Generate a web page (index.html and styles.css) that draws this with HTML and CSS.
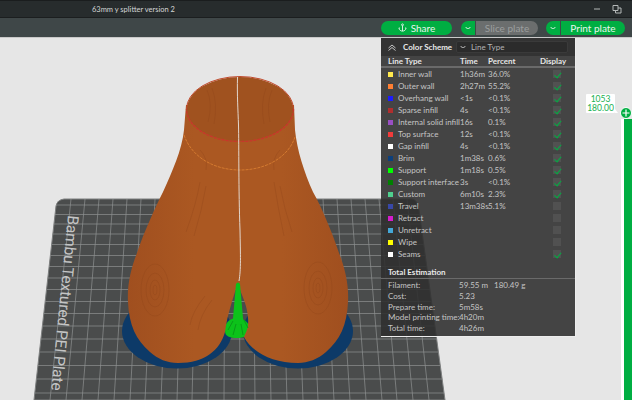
FILE: index.html
```html
<!DOCTYPE html>
<html lang="en">
<head>
<meta charset="utf-8">
<title>63mm y splitter version 2</title>
<link rel="stylesheet" href="styles.css">
</head>
<body>
<div class="app">
  <header class="titlebar">
    <span class="doc-title">63mm y splitter version 2</span>
    <div class="win-controls">
      <svg class="win-icon" width="8" height="8" viewBox="0 0 8 8"><path d="M1 4H7" class="win-stroke"/></svg>
      <svg class="win-icon" width="10" height="10" viewBox="0 0 10 10"><path d="M1 1.500H6V6.500H1ZM3.500 6.500V9H9V4H6" class="win-stroke"/></svg>
    </div>
  </header>
  <div class="toolbar">
    <button class="btn share">
      <svg width="9" height="9" viewBox="0 0 10 10"><path d="M5 3V9M2 5.500H1C1.500 8 3 9 5 9S8.500 8 9 5.500H8M5 1A1 1 0 1 0 5 3A1 1 0 1 0 5 1Z" class="btn-stroke"/></svg>
      <span>Share</span>
    </button>
    <div class="split slice-group">
      <button class="btn caret"><svg width="6" height="4" viewBox="0 0 6 4"><path d="M.5 1C2 3 4 3 5.500 1" class="btn-stroke"/></svg></button>
      <button class="btn slice">Slice plate</button>
    </div>
    <div class="split print-group">
      <button class="btn caret"><svg width="6" height="4" viewBox="0 0 6 4"><path d="M.5 1C2 3 4 3 5.500 1" class="btn-stroke"/></svg></button>
      <button class="btn print">Print plate</button>
    </div>
  </div>
  <main class="viewport">
    <svg class="scene" width="632" height="362" viewBox="0 38 632 362">
      <defs>
        <clipPath id="plate-clip"><path d="M64 199H412Q417 199 419 210L445 400H34L56 206Q57 200 64 199Z"/></clipPath>
        <linearGradient id="body-fill" x1="0" x2="1" y1="0" y2="0">
          <stop offset="0" stop-color="#a04f1f"/>
          <stop offset=".3" stop-color="#ab5822"/>
          <stop offset=".7" stop-color="#ab5822"/>
          <stop offset="1" stop-color="#a04f1f"/>
        </linearGradient>
      </defs>
      <path class="plate" d="M64 199H412Q417 199 419 210L445 400H34L56 206Q57 200 64 199Z"/>
      <g clip-path="url(#plate-clip)">
        <path class="grid" d="M0 205H632M0 214.500H632M0 224H632M0 234H632M0 244.500H632M0 255.500H632M0 266.500H632M0 278H632M0 289.500H632M0 301.500H632M0 313.500H632M0 326H632M0 339H632M0 352H632M0 365.500H632M0 379H632M0 393H632"/>
        <path class="grid" d="M71 199L50 400M85 199L66 400M99 199L82 400M113 199L98 400M127 199L114 400M141 199L130 400M155 199L145 400M169 199L161 400M183 199L177 400M197 199L192 400M211 199L208 400M225 199L224 400M239 199L240 400M253 199L255 400M267 199L271 400M281 199L287 400M295 199L303 400M309 199L318 400M323 199L334 400M337 199L350 400M351 199L366 400M365 199L382 400M379 199L397 400M393 199L413 400M407 199L429 400"/>
      </g>
      <text class="plate-label" x="0" y="0" transform="translate(68 215) rotate(95.500)">Bambu Textured PEI Plate</text>
      <ellipse class="brim" cx="177" cy="331" rx="55" ry="37.500"/>
      <ellipse class="brim" cx="298" cy="331" rx="55" ry="37.500"/>
      <path class="support" d="M225 331C224 322 231 318 237 318C244 318 250 323 250 330C250 336 243 338 237 338C231 338 225 337 225 331Z"/>
      <path class="body" fill="url(#body-fill)" d="M186 105L184 130C182 150 172 172 163 192C155 208 144 232 137 253C131 268 127 285 128 302C129 325 136 340 150 352C158 359 167 363 178 363C205 363 220 350 225 332C227 315 234 295 238 283C241 295 247 303 248 318C249 328 246 332 244 337C252 352 272 363 298 363C308 363 318 359 326 352C340 340 347 325 348 302C349 285 345 268 339 253C332 232 322 208 313 192C304 172 297 150 295 130L294 105Z"/>
      <path class="support" d="M236 284Q238 281 240 284L243 318Q245 324 238 325Q232 324 233 318Z"/>
      <path class="support-rib" d="M233 321L228 330M236 324L233 335M241 324L243 335M244 320L248 328"/>
      <g class="rings">
        <ellipse cx="155" cy="290" rx="2" ry="5"/>
        <ellipse cx="155" cy="290" rx="5" ry="10"/>
        <ellipse cx="155" cy="290" rx="9" ry="17"/>
        <ellipse cx="155" cy="290" rx="14" ry="26"/>
        <ellipse cx="318" cy="288" rx="2" ry="5"/>
        <ellipse cx="318" cy="288" rx="5" ry="10"/>
        <ellipse cx="318" cy="288" rx="9" ry="17"/>
        <ellipse cx="318" cy="288" rx="14" ry="26"/>
        <path d="M200 182Q196 205 186 232M206 186Q202 210 194 236M280 186Q284 208 292 232M274 182Q278 208 284 236M212 300Q200 315 198 330M205 296Q192 312 190 325"/>
      </g>
      <ellipse class="neck-inner" cx="240" cy="109" rx="53" ry="32"/>
      <g class="rings">
        <path d="M207 90Q213 104 208 122M212 88Q218 104 214 124M272 90Q266 104 270 122M266 88Q260 104 264 124M200 150Q208 158 206 170M280 150Q272 158 274 170"/>
      </g>
      <path class="collar" d="M184 135C192 158 215 170 240 170C265 170 288 158 295 137"/>
      <path class="rim-back" d="M186.500 109A53.500 32.500 0 0 1 293.500 109"/>
      <path class="rim" d="M293.500 109A53.500 32.500 0 0 1 186.500 109"/>
      <path class="seam" d="M237.500 77C237 95 238 110 238.500 125C239 145 238.500 190 240 230C240.500 255 241 270 239 281"/>
    </svg>

    <section class="legend">
      <div class="legend-top">
        <svg class="collapse" width="8" height="7" viewBox="0 0 8 7"><path d="M.5 4L4 1L7.500 4M.5 6.500L4 3.500L7.500 6.500" class="icon-stroke"/></svg>
        <strong class="scheme-label">Color Scheme</strong>
        <div class="scheme-select">
          <svg width="6" height="4" viewBox="0 0 6 4"><path d="M.5 1C2 3 4 3 5.500 1" class="icon-stroke"/></svg>
          <span>Line Type</span>
        </div>
      </div>
      <div class="legend-head">
        <span>Line Type</span><span>Time</span><span>Percent</span><span>Display</span>
      </div>
      <ul class="rows">
        <li class="row"><i class="sw c1"></i><span>Inner wall</span><span>1h36m</span><span>36.0%</span><b class="chk on"></b></li>
        <li class="row"><i class="sw c2"></i><span>Outer wall</span><span>2h27m</span><span>55.2%</span><b class="chk on"></b></li>
        <li class="row"><i class="sw c3"></i><span>Overhang wall</span><span>&lt;1s</span><span>&lt;0.1%</span><b class="chk on"></b></li>
        <li class="row"><i class="sw c4"></i><span>Sparse infill</span><span>4s</span><span>&lt;0.1%</span><b class="chk on"></b></li>
        <li class="row"><i class="sw c5"></i><span>Internal solid infill</span><span>16s</span><span>0.1%</span><b class="chk on"></b></li>
        <li class="row"><i class="sw c6"></i><span>Top surface</span><span>12s</span><span>&lt;0.1%</span><b class="chk on"></b></li>
        <li class="row"><i class="sw c7"></i><span>Gap infill</span><span>4s</span><span>&lt;0.1%</span><b class="chk on"></b></li>
        <li class="row"><i class="sw c8"></i><span>Brim</span><span>1m38s</span><span>0.6%</span><b class="chk on"></b></li>
        <li class="row"><i class="sw c9"></i><span>Support</span><span>1m18s</span><span>0.5%</span><b class="chk on"></b></li>
        <li class="row"><i class="sw c10"></i><span>Support interface</span><span>3s</span><span>&lt;0.1%</span><b class="chk on"></b></li>
        <li class="row"><i class="sw c11"></i><span>Custom</span><span>6m10s</span><span>2.3%</span><b class="chk on"></b></li>
        <li class="row"><i class="sw c12"></i><span>Travel</span><span>13m38s</span><span>5.1%</span><b class="chk"></b></li>
        <li class="row"><i class="sw c13"></i><span>Retract</span><span></span><span></span><b class="chk"></b></li>
        <li class="row"><i class="sw c14"></i><span>Unretract</span><span></span><span></span><b class="chk"></b></li>
        <li class="row"><i class="sw c15"></i><span>Wipe</span><span></span><span></span><b class="chk"></b></li>
        <li class="row"><i class="sw c7"></i><span>Seams</span><span></span><span></span><b class="chk on"></b></li>
      </ul>
      <div class="total">
        <strong class="total-title">Total Estimation</strong>
        <dl class="total-grid">
          <dt>Filament:</dt><dd><span class="len">59.55 m</span><span>180.49 g</span></dd>
          <dt>Cost:</dt><dd>5.23</dd>
          <dt>Prepare time:</dt><dd>5m58s</dd>
          <dt>Model printing time:</dt><dd>4h20m</dd>
          <dt>Total time:</dt><dd>4h26m</dd>
        </dl>
      </div>
    </section>

    <div class="tip">1053<br>180.00</div>
    <div class="slider">
      <span class="thumb"><svg width="8" height="8" viewBox="0 0 8 8"><path d="M4 .5V7.500M.5 4H7.500" class="plus"/></svg></span>
      <span class="track"></span>
    </div>
  </main>
</div>
</body>
</html>
```
FILE: styles.css
```css
* { box-sizing: border-box; margin: 0; padding: 0; }
html, body { width: 632px; height: 400px; overflow: hidden; }
body { font-family: Lato, Roboto, "Liberation Sans", sans-serif; font-size: 8px; color: #d6d6d6; }
.app { width: 632px; height: 400px; display: flex; flex-direction: column; background: #e6e6e6; }

.titlebar { height: 18px; flex: none; background: #272c2d; border-top: 1px solid #1a1d1e; border-bottom: 1px solid #1b1e1f; display: flex; align-items: center; padding-left: 92px; padding-right: 10px; }
.doc-title { font-size: 7.500px; color: #d4d6d6; }
.win-controls { margin-left: auto; display: flex; align-items: center; gap: 11px; }
.win-icon { display: block; }
.win-stroke { fill: none; stroke: #b4b8b8; stroke-width: 1; }

.toolbar { height: 20px; flex: none; background: #3f4748; border-bottom: 1px solid #c9c9c9; display: flex; align-items: center; padding-left: 381px; }
.btn { border: 0; font-family: inherit; font-size: 10px; color: #e8f6ee; background: #00ae42; height: 14px; display: flex; align-items: center; justify-content: center; }
.btn-stroke { fill: none; stroke: #e8f6ee; stroke-width: 1; }
.share { width: 71px; border-radius: 7px; gap: 4px; }
.split { display: flex; gap: 1px; }
.slice-group { margin-left: 9px; width: 77px; }
.print-group { margin-left: 8px; width: 79px; }
.caret { width: 14px; flex: none; border-radius: 7px 0 0 7px; }
.slice { flex: 1; background: #6b6e6e; color: #9b9e9e; border-radius: 0 7px 7px 0; }
.print { flex: 1; border-radius: 0 7px 7px 0; }

.viewport { flex: 1; position: relative; }
.scene { position: absolute; left: 0; top: 0; display: block; }
.plate { fill: #4a4c4c; stroke: #7c7e7e; stroke-width: 1; }
.grid { fill: none; stroke: #8f9191; stroke-width: 1; stroke-opacity: .7; }
.plate-label { font-family: Roboto, sans-serif; font-size: 15.500px; letter-spacing: -.1px; fill: #c4c5c5; }
.brim { fill: #0d3a68; }
.support { fill: #0cc21a; }
.support-rib { fill: none; stroke: #0a9a18; stroke-width: 1; }
.body { stroke: none; }
.rings { fill: none; stroke: #8e4519; stroke-width: 1; stroke-opacity: .35; }
.neck-inner { fill: #a0521f; }
.collar { fill: none; stroke: #d47a30; stroke-width: 1; stroke-dasharray: 3 1; }
.rim { fill: none; stroke: #c8362c; stroke-width: 1.300; stroke-dasharray: 3 1; }
.rim-back { fill: none; stroke: #c0492c; stroke-width: 1; }
.seam { fill: none; stroke: #e2d6cc; stroke-width: 1; }

.legend { position: absolute; left: 381px; top: 0; width: 195px; height: 299px; background: rgba(47, 47, 47, .89); border-right: 1px solid #ededed; border-bottom: 1px solid #ededed; display: flex; flex-direction: column; }
.legend-top { height: 18px; flex: none; background: rgba(30, 30, 30, .45); display: flex; align-items: center; padding-left: 7px; }
.icon-stroke { fill: none; stroke: #c8c8c8; stroke-width: 1; }
.collapse { display: block; flex: none; }
.scheme-label { margin-left: 7px; width: 53px; flex: none; white-space: nowrap; font-weight: 700; color: #e8e8e8; }
.scheme-select { width: 112px; height: 12px; flex: none; background: #2b2b2b; border: 1px solid #3a3a3a; border-radius: 2px; display: flex; align-items: center; gap: 5px; padding-left: 3px; color: #b4b4b4; }

.legend-head { height: 12px; flex: none; display: grid; grid-template-columns: 72px 28px 52px 1fr; align-items: center; padding-left: 7px; color: #e6e6e6; font-weight: 700; border-bottom: 2px solid #6a6a6a; }
.rows { list-style: none; padding-left: 7px; flex: none; }
.row { height: 12px; display: grid; grid-template-columns: 10px 62px 28px 65px 8px; align-items: center; color: #c4c4c4; white-space: nowrap; }
.sw { width: 5px; height: 5px; display: block; }
.chk { width: 8px; height: 8px; display: block; background: #515151; position: relative; }
.chk.on::after { content: ""; position: absolute; left: 2.500px; top: .5px; width: 3px; height: 5.500px; border: solid #00ae42; border-width: 0 1.200px 1.200px 0; transform: rotate(40deg); }
.c1 { background: #ffe94d; } .c2 { background: #ff7f33; } .c3 { background: #1c1cff; } .c4 { background: #b02e2e; } .c5 { background: #9a4fc4; }
.c6 { background: #f23b3b; } .c7 { background: #fff; } .c8 { background: #0c3f7c; } .c9 { background: #00ff00; } .c10 { background: #008000; }
.c11 { background: #4fcf8e; } .c12 { background: #3848a8; } .c13 { background: #d41ccc; } .c14 { background: #44a8d8; } .c15 { background: #ffff00; }

.total { margin-top: 7px; flex: 1; }
.total-title { display: block; padding-left: 7px; height: 12px; line-height: 10px; font-weight: 700; color: #e8e8e8; border-bottom: 1px solid #6a6a6a; }
.total-grid { display: grid; grid-template-columns: 71px 1fr; grid-auto-rows: 10.700px; padding-left: 7px; margin-top: 1px; align-items: center; color: #c4c4c4; white-space: nowrap; }
.len { display: inline-block; width: 35px; }

.tip { position: absolute; left: 586px; top: 56px; width: 29px; height: 19px; background: #fff; color: #18b050; font-size: 8.500px; line-height: 9px; text-align: center; padding-top: .5px; border-radius: 1px; }
.tip::after { content: ""; position: absolute; right: -3px; bottom: 0; border-left: 3px solid #fff; border-top: 4px solid transparent; }
.slider { position: absolute; left: 620px; top: 69px; bottom: 0; width: 12px; display: flex; flex-direction: column; align-items: center; }
.thumb { width: 12px; height: 12px; flex: none; border-radius: 50%; background: #00ae42; border: 1px solid #fff; display: flex; align-items: center; justify-content: center; }
.plus { fill: none; stroke: #fff; stroke-width: 1.200; }
.track { flex: 1; width: 8px; margin-left: 3px; background: #00ae42; box-shadow: -3px 0 0 #fff; }
```
